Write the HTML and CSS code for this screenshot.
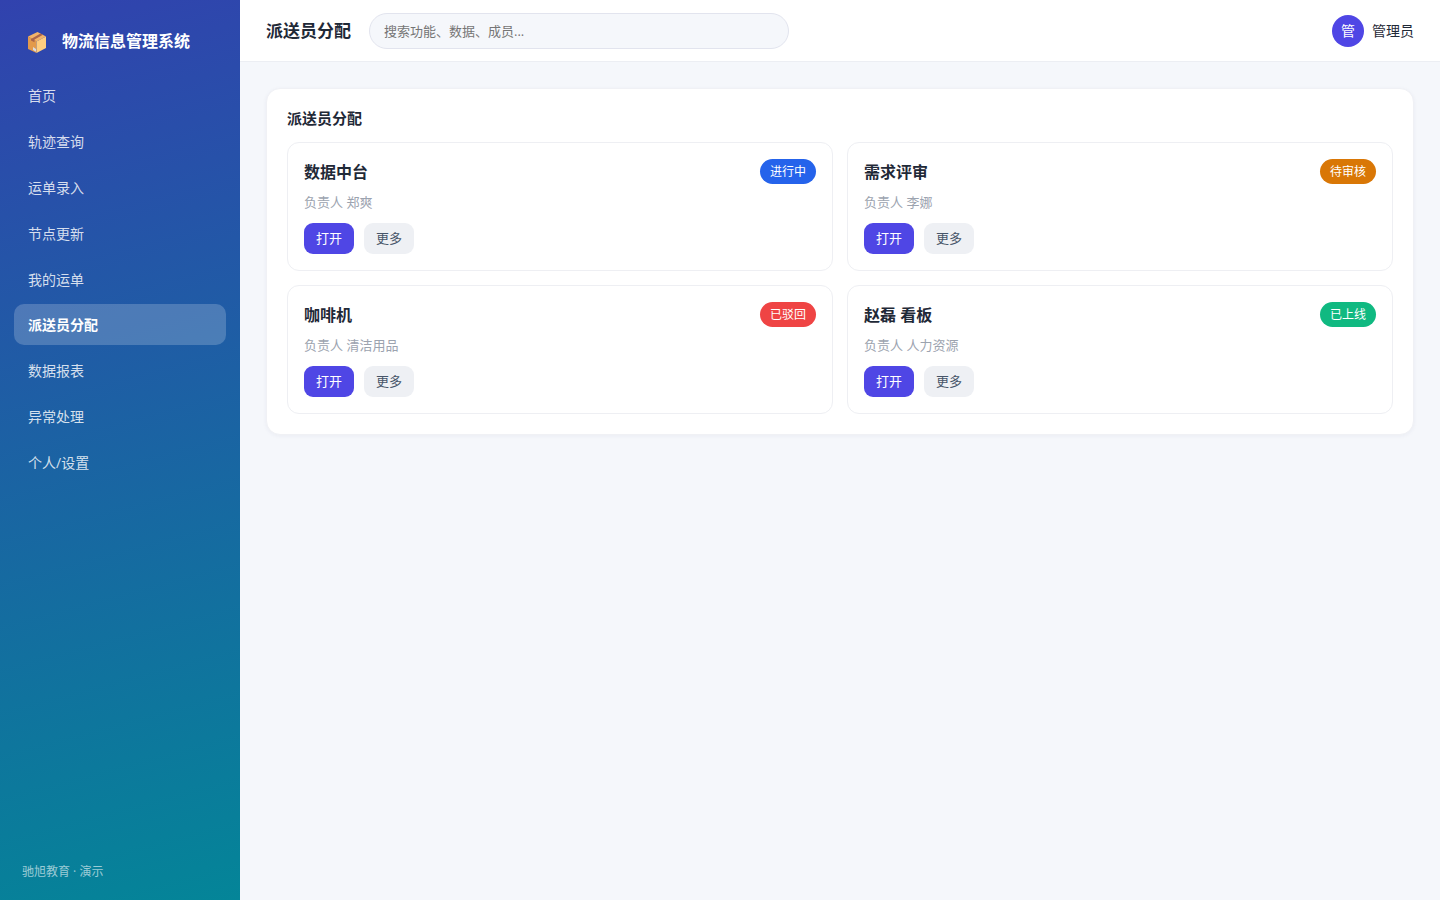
FILE: index.html
```html
<!DOCTYPE html>
<html lang="zh-CN">
<head>
<meta charset="utf-8">
<meta name="viewport" content="width=device-width, initial-scale=1">
<title>派送员分配 - 物流信息管理系统</title>
<link rel="stylesheet" href="styles.css">
</head>
<body>
<div class="app">
  <aside class="sidebar">
    <div class="brand">
      <svg class="brand-icon" viewBox="0 0 18 21" aria-hidden="true">
        <path fill="#f3b469" d="M0 4.500 9.500 0 18 4.500 8.500 9.500z"/>
        <path fill="#e39a4b" d="M0 4.500l8.500 4.500v12L0 17z"/>
        <path fill="#ffce80" d="M8.500 9.500 18 4.500V16l-9.500 5z"/>
        <path fill="#a9654c" d="M3 7l9.500-5.500 2.500 1.300L6.500 7.500v2.700L3 8.500z"/>
        <path fill="#d9dde2" d="M5 15l3 2v2.800L5 18z"/>
      </svg>
      <span class="brand-name">物流信息管理系统</span>
    </div>
    <nav class="nav" aria-label="主导航">
      <a class="nav-item" href="#">首页</a>
      <a class="nav-item" href="#">轨迹查询</a>
      <a class="nav-item" href="#">运单录入</a>
      <a class="nav-item" href="#">节点更新</a>
      <a class="nav-item" href="#">我的运单</a>
      <a class="nav-item active" href="#" aria-current="page">派送员分配</a>
      <a class="nav-item" href="#">数据报表</a>
      <a class="nav-item" href="#">异常处理</a>
      <a class="nav-item" href="#">个人/设置</a>
    </nav>
    <div class="sidebar-foot">驰旭教育 · 演示</div>
  </aside>
  <div class="main">
    <header class="topbar">
      <h1 class="page-title">派送员分配</h1>
      <input class="search" type="search" placeholder="搜索功能、数据、成员..." aria-label="搜索">
      <div class="user">
        <span class="avatar">管</span>
        <span>管理员</span>
      </div>
    </header>
    <main class="content">
      <section class="panel">
        <h2 class="panel-title">派送员分配</h2>
        <div class="grid">
          <article class="card">
            <div class="card-head"><h3 class="card-title">数据中台</h3><span class="badge blue">进行中</span></div>
            <p class="owner">负责人 郑爽</p>
            <div class="actions"><button class="btn primary" type="button">打开</button><button class="btn" type="button">更多</button></div>
          </article>
          <article class="card">
            <div class="card-head"><h3 class="card-title">需求评审</h3><span class="badge orange">待审核</span></div>
            <p class="owner">负责人 李娜</p>
            <div class="actions"><button class="btn primary" type="button">打开</button><button class="btn" type="button">更多</button></div>
          </article>
          <article class="card">
            <div class="card-head"><h3 class="card-title">咖啡机</h3><span class="badge red">已驳回</span></div>
            <p class="owner">负责人 清洁用品</p>
            <div class="actions"><button class="btn primary" type="button">打开</button><button class="btn" type="button">更多</button></div>
          </article>
          <article class="card">
            <div class="card-head"><h3 class="card-title">赵磊 看板</h3><span class="badge green">已上线</span></div>
            <p class="owner">负责人 人力资源</p>
            <div class="actions"><button class="btn primary" type="button">打开</button><button class="btn" type="button">更多</button></div>
          </article>
        </div>
      </section>
    </main>
  </div>
</div>
</body>
</html>
```

FILE: styles.css
```css
* { box-sizing: border-box; }
body {
  margin: 0;
  background: #f5f7fb;
  color: #1f2937;
  font-family: "Open Sans", "Noto Sans CJK SC", sans-serif;
  font-size: 14px;
  line-height: 20px;
}
h1, h2, h3, p { margin: 0; }
button, input { font: inherit; }

.app { display: flex; min-height: 100vh; }
.sidebar {
  flex: none;
  width: 240px;
  display: flex;
  flex-direction: column;
  padding: 22px 14px 20px;
  background: linear-gradient(165deg, #3142ae, #048598);
  color: #fff;
}
.brand { display: flex; align-items: center; gap: 16px; padding: 6px 14px 21px; }
.brand-icon { width: 18px; height: 21px; margin-top: 4px; }
.brand-name { font-size: 16px; font-weight: 700; line-height: 24px; }
.nav { display: flex; flex-direction: column; gap: 4px; }
.nav-item {
  padding: 12px 14px 10px;
  border-radius: 10px;
  color: rgba(255, 255, 255, .82);
  text-decoration: none;
}
.nav-item.active {
  padding: 11px 14px;
  background: rgba(255, 255, 255, .2);
  color: #fff;
  font-weight: 700;
  line-height: 19px;
}
.sidebar-foot { margin-top: auto; padding: 0 8px; font-size: 12px; line-height: 16px; color: rgba(255, 255, 255, .6); }

.main { flex: 1; min-width: 0; }
.topbar {
  display: flex;
  align-items: center;
  gap: 18px;
  padding: 13px 26px 12px;
  background: #fff;
  border-bottom: 1px solid #eceef3;
}
.page-title { font-size: 17px; font-weight: 700; line-height: 24px; }
.search {
  width: 420px;
  height: 36px;
  min-width: 0;
  padding: 0 14px;
  border: 1px solid #e2e4ee;
  border-radius: 18px;
  background: #f5f7fb;
  font-size: 13px;
  appearance: none;
  outline-color: #4f46e5;
}
.search::placeholder { color: #757575; }
.user { margin-left: auto; display: flex; align-items: center; gap: 8px; }
.avatar {
  width: 32px;
  height: 32px;
  border-radius: 50%;
  background: #4f46e5;
  color: #fff;
  line-height: 32px;
  text-align: center;
}

.content { padding: 26px; }
.panel {
  padding: 20px;
  background: #fff;
  border: 1px solid #f0f1f5;
  border-radius: 14px;
  box-shadow: 0 1px 4px rgba(31, 41, 90, .05);
}
.panel-title { margin-bottom: 14px; font-size: 15px; font-weight: 700; line-height: 19px; }
.grid { display: grid; grid-template-columns: 1fr 1fr; gap: 14px; }
.card { padding: 16px; border: 1px solid #eeeff3; border-radius: 12px; }
.card-head { display: flex; justify-content: space-between; align-items: center; }
.card-title { font-size: 16px; font-weight: 700; line-height: 24px; }
.badge { padding: 4px 10px; border-radius: 13px; color: #fff; font-size: 12px; line-height: 17px; }
.blue { background: #2563eb; }
.orange { background: #d97706; }
.red { background: #ef4444; }
.green { background: #10b981; }
.owner { margin: 8px 0 11px; color: #9ca3af; font-size: 13px; }
.actions { display: flex; gap: 10px; }
.btn {
  padding: 6px 12px;
  border: 0;
  border-radius: 9px;
  background: #eef0f4;
  color: #475569;
  font-size: 13px;
  line-height: 19px;
  cursor: pointer;
}
.btn.primary { background: #4f46e5; color: #fff; }
```
